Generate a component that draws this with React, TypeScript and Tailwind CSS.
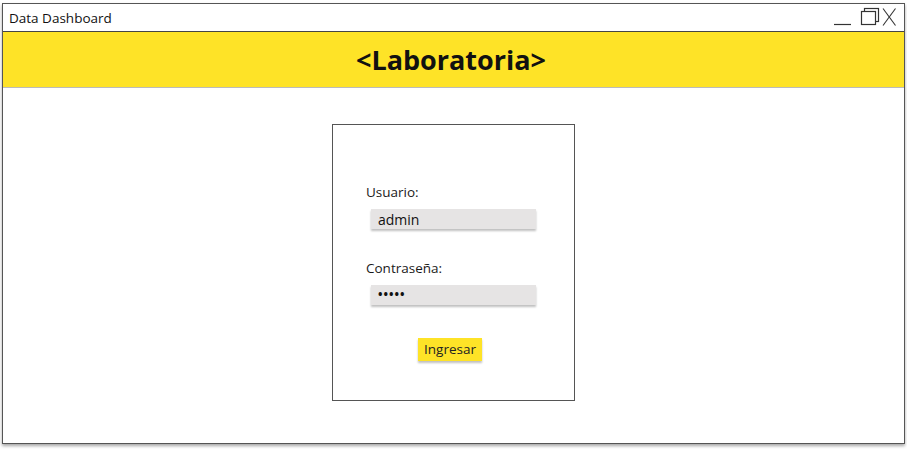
import React from 'react'

// Window chrome controls drawn as simple strokes, Balsamiq style
function WindowControls() {
  return (
    <div className="flex items-end pr-[7px] pt-[6px]">
      <svg width="20" height="20" viewBox="0 0 20 20" className="mr-[7px]">
        <line x1="1" y1="17.5" x2="18" y2="17.5" stroke="#333" strokeWidth="1.2" />
      </svg>
      <svg width="20" height="20" viewBox="0 0 20 20" className="mr-[1px]">
        <rect x="4.5" y="1.5" width="14" height="13" fill="none" stroke="#333" strokeWidth="1.2" />
        <rect x="1.5" y="4.5" width="14" height="13" fill="white" stroke="#333" strokeWidth="1.2" />
      </svg>
      <svg width="16" height="20" viewBox="0 0 16 20">
        <line x1="2" y1="1.5" x2="14.5" y2="18.5" stroke="#333" strokeWidth="1.1" />
        <line x1="14.5" y1="1.5" x2="2" y2="18.5" stroke="#333" strokeWidth="1.1" />
      </svg>
    </div>
  )
}

function Field({ label, children }: { label: string; children: React.ReactNode }) {
  return (
    <div className="flex flex-col">
      <span className="text-[13.5px] leading-[18px] text-[#1a1a1a]">{label}</span>
      <div className="ml-[5px] mt-[8px] flex h-[20px] w-[165px] items-center bg-[#e6e4e4] pl-[7px] text-[14px] text-[#111] shadow-[0_2px_2px_rgba(0,0,0,0.25)]">
        {children}
      </div>
    </div>
  )
}

export default function App() {
  return (
    <div className="h-[449px] w-[907px] bg-white pl-[2px] pt-[3px]" style={{ fontFamily: '"Open Sans", sans-serif' }}>
      <div className="flex h-[441px] w-[903px] flex-col border border-[#555] bg-white shadow-[0_2px_3px_rgba(0,0,0,0.35)]">
        {/* Title bar */}
        <div className="flex h-[28px] items-start justify-between border-b border-[#444]">
          <span className="pl-[6px] pt-[5px] text-[13.5px] leading-[18px] text-[#111]">Data Dashboard</span>
          <div className="-mt-[3px]">
            <WindowControls />
          </div>
        </div>

        {/* Yellow header */}
        <div className="flex h-[56px] items-center justify-center border-b border-[#bbb] bg-[#fee327]">
          <span className="ml-[-5px] text-[27px] font-bold leading-none text-[#111]">&lt;Laboratoria&gt;</span>
        </div>

        {/* Login card */}
        <div className="flex flex-1 justify-center pt-[36px]">
          <div className="flex h-[277px] w-[243px] flex-col border border-[#555] pl-[33px] pt-[58px]">
            <Field label="Usuario:">admin</Field>
            <div className="mt-[30px]">
              <Field label="Contraseña:">
                <span className="text-[12px] font-bold tracking-[1px]">•••••</span>
              </Field>
            </div>
            <div className="ml-[52px] mt-[31px]">
              <button className="h-[23px] w-[64px] bg-[#fee327] text-[13.5px] text-[#222] shadow-[0_2px_2px_rgba(0,0,0,0.25)]">
                Ingresar
              </button>
            </div>
          </div>
        </div>
      </div>
    </div>
  )
}
